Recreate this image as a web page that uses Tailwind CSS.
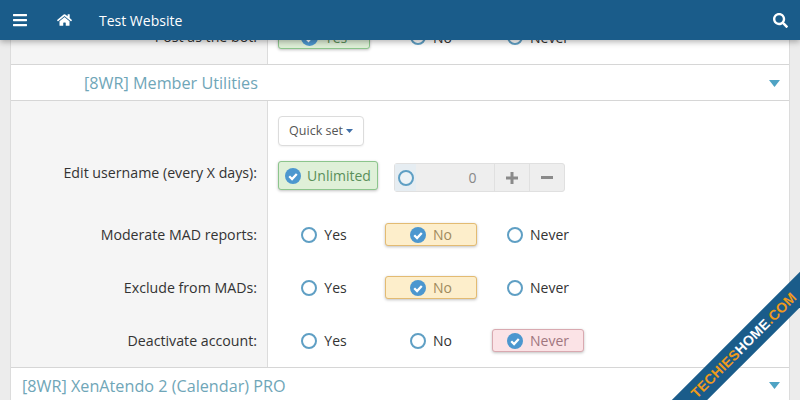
<!DOCTYPE html>
<html lang="en">
<head>
    <meta charset="UTF-8">
    <meta name="viewport" content="width=device-width, initial-scale=1.0">
    <title>Test Website</title>
    <script src="https://cdn.jsdelivr.net/npm/@tailwindcss/browser@4"></script>
</head>
<body class="relative w-[800px] h-[400px] overflow-hidden bg-[#ececec] font-['Open_Sans','Noto_Sans',sans-serif] text-[14px] text-[#333]">

    <!-- top bar -->
    <header class="absolute top-0 inset-x-0 z-10 h-10 flex items-center bg-[#1a5c8a] text-white shadow-[0_2px_6px_rgba(0,0,0,0.3)]">
        <svg class="ml-[13px] w-[14px] h-[16px]" viewBox="0 0 448 512" fill="#fff"><path d="M16 132h416c8.837 0 16-7.163 16-16V76c0-8.837-7.163-16-16-16H16C7.163 60 0 67.163 0 76v40c0 8.837 7.163 16 16 16zm0 160h416c8.837 0 16-7.163 16-16v-40c0-8.837-7.163-16-16-16H16c-8.837 0-16 7.163-16 16v40c0 8.837 7.163 16 16 16zm0 160h416c8.837 0 16-7.163 16-16v-40c0-8.837-7.163-16-16-16H16c-8.837 0-16 7.163-16 16v40c0 8.837 7.163 16 16 16z"/></svg>
        <svg class="ml-[30px] w-[15px] h-[14px]" viewBox="0 0 576 512" fill="#fff"><path d="M280.37 148.26L96 300.11V464a16 16 0 0 0 16 16l112.06-.29a16 16 0 0 0 15.92-16V368a16 16 0 0 1 16-16h64a16 16 0 0 1 16 16v95.64a16 16 0 0 0 16 16.05L464 480a16 16 0 0 0 16-16V300L295.67 148.26a12.19 12.19 0 0 0-15.3 0zM571.6 251.47L488 182.56V44.05a12 12 0 0 0-12-12h-56a12 12 0 0 0-12 12v72.61L318.47 43a48 48 0 0 0-61 0L4.34 251.47a12 12 0 0 0-1.6 16.9l25.5 31A12 12 0 0 0 45.15 301l235.22-193.74a12.19 12.19 0 0 1 15.3 0L530.9 301a12 12 0 0 0 16.9-1.6l25.5-31a12 12 0 0 0-1.7-16.93z"/></svg>
        <span class="ml-[27px] text-[14px]">Test Website</span>
        <svg class="ml-auto mr-[12px] w-[15px] h-[15px]" viewBox="0 0 512 512" fill="#fff"><path d="M505 442.7L405.3 343c-4.5-4.5-10.6-7-17-7H372c27.6-35.3 44-79.7 44-128C416 93.1 322.9 0 208 0S0 93.1 0 208s93.1 208 208 208c48.3 0 92.7-16.4 128-44v16.3c0 6.4 2.5 12.5 7 17l99.7 99.7c9.4 9.4 24.6 9.4 33.9 0l28.3-28.3c9.4-9.4 9.4-24.6.1-34zM208 336c-70.7 0-128-57.2-128-128 0-70.7 57.2-128 128-128 70.7 0 128 57.2 128 128 0 70.7-57.2 128-128 128z"/></svg>
    </header>

    <!-- options panel -->
    <main class="mt-[12px] ml-[10px] w-[780px] border-x border-[#dcdcdc] bg-white">

        <div class="flex h-[52px]">
            <div class="w-[257px] shrink-0 bg-[#f5f5f5] border-r border-[#dcdcdc] pr-[10px] pb-[2px] text-[14.2px] flex items-center justify-end">Post as the bot:</div>
            <div class="pl-[10px] pb-[2px] grid grid-cols-[92px_92px_92px] gap-x-[15px] items-center">
                <span class="h-[23px] rounded-[3px] border border-[#8cc58c] bg-[#dff0d8] text-[#5a8f5a] shadow-[0_1px_3px_rgba(0,0,0,0.25)] flex items-center justify-center gap-[7px]"><svg class="w-[17px] h-[17px]" viewBox="0 0 17 17"><circle cx="8.5" cy="8.5" r="8.5" fill="#4c97cf"/><path d="M4.5 8.7l3 3 5-5.4" fill="none" stroke="#fff" stroke-width="2.4"/></svg>Yes</span>
                <span class="flex items-center justify-center gap-[7px]"><span class="w-[16px] h-[16px] rounded-full border-[2.5px] border-[#5f9fc4] bg-white"></span>No</span>
                <span class="flex items-center justify-center gap-[7px]"><span class="w-[16px] h-[16px] rounded-full border-[2.5px] border-[#5f9fc4] bg-white"></span>Never</span>
            </div>
        </div>

        <div class="h-[37px] border-y border-[#d6d6d6] pl-[73px] pr-[9px] pt-[1px] flex items-center justify-between text-[16.2px] text-[#6fa6b8]">
            <span>[8WR] Member Utilities</span>
            <svg class="w-[11px] h-[7px]" viewBox="0 0 11 7" fill="#4fa3c4"><path d="M0 0h11L5.500 7z"/></svg>
        </div>

        <div class="flex">
            <div class="w-[257px] shrink-0 bg-[#f5f5f5] border-r border-[#dcdcdc] pr-[10px] text-right text-[14.2px]">
                <div class="h-[60px]"></div>
                <div class="h-[47px] flex items-start justify-end pt-[1px]">Edit username (every X days):</div>
                <div class="h-[53px] flex items-center justify-end">Moderate MAD reports:</div>
                <div class="h-[53px] flex items-center justify-end">Exclude from MADs:</div>
                <div class="h-[53px] flex items-center justify-end">Deactivate account:</div>
            </div>
            <div class="pl-[10px]">
                <div class="h-[60px] pt-[15px]">
                    <span class="inline-flex items-center gap-[3px] h-[30px] w-[86px] justify-center rounded-[4px] border border-[#dcdcdc] bg-white text-[12.500px] text-[#555] shadow-[0_1px_2px_rgba(0,0,0,0.06)]">Quick set<svg class="w-[7px] h-[4px]" viewBox="0 0 7 4" fill="#3f6fa8"><path d="M0 0h7L3.500 4z"/></svg></span>
                </div>
                <div class="h-[47px] flex items-start">
                    <span class="h-[29px] w-[100px] rounded-[3px] border border-[#8cc58c] bg-[#dff0d8] text-[#5a8f5a] shadow-[0_1px_3px_rgba(0,0,0,0.25)] flex items-center justify-center gap-[6px]"><svg class="w-[16px] h-[16px]" viewBox="0 0 17 17"><circle cx="8.500" cy="8.500" r="8.500" fill="#4c97cf"/><path d="M4.500 8.700l3 3 5-5.400" fill="none" stroke="#fff" stroke-width="2.400"/></svg>Unlimited</span>
                    <div class="ml-[16px] mt-[2px] w-[171px] h-[29px] flex rounded-[3px] border border-[#e0e0e0] bg-[#eeeeee] text-[#888]">
                        <span class="w-[21px] flex items-center pl-[3px] bg-[#e6edf2]"><span class="w-[16px] h-[16px] rounded-full border-[2.5px] border-[#5f9fc4] bg-[#eef3f6]"></span></span>
                        <span class="w-[79px] flex items-center justify-end pr-[18px]">0</span>
                        <span class="w-[35px] border-l border-[#e0e0e0] flex items-center justify-center"><svg class="w-[12px] h-[12px]" viewBox="0 0 12 12" fill="#8a8a8a"><path d="M4.500 0h3v4.500H12v3H7.500V12h-3V7.500H0v-3h4.500z"/></svg></span>
                        <span class="w-[35px] border-l border-[#e0e0e0] flex items-center justify-center"><svg class="w-[12px] h-[3px]" viewBox="0 0 12 3" fill="#8a8a8a"><path d="M0 0h12v3H0z"/></svg></span>
                    </div>
                </div>

                <div class="h-[53px] grid grid-cols-[92px_92px_92px] gap-x-[15px] items-center">
                    <span class="flex items-center justify-center gap-[7px]"><span class="w-[16px] h-[16px] rounded-full border-[2.5px] border-[#5f9fc4] bg-white"></span>Yes</span>
                    <span class="h-[23px] rounded-[3px] border border-[#e3bb72] bg-[#fdeecb] text-[#a08a5c] shadow-[0_1px_3px_rgba(0,0,0,0.25)] flex items-center justify-center gap-[7px]"><svg class="w-[16px] h-[16px]" viewBox="0 0 17 17"><circle cx="8.500" cy="8.500" r="8.500" fill="#4c97cf"/><path d="M4.500 8.700l3 3 5-5.400" fill="none" stroke="#fff" stroke-width="2.400"/></svg>No</span>
                    <span class="flex items-center justify-center gap-[7px]"><span class="w-[16px] h-[16px] rounded-full border-[2.5px] border-[#5f9fc4] bg-white"></span>Never</span>
                </div>
                <div class="h-[53px] grid grid-cols-[92px_92px_92px] gap-x-[15px] items-center">
                    <span class="flex items-center justify-center gap-[7px]"><span class="w-[16px] h-[16px] rounded-full border-[2.5px] border-[#5f9fc4] bg-white"></span>Yes</span>
                    <span class="h-[23px] rounded-[3px] border border-[#e3bb72] bg-[#fdeecb] text-[#a08a5c] shadow-[0_1px_3px_rgba(0,0,0,0.25)] flex items-center justify-center gap-[7px]"><svg class="w-[16px] h-[16px]" viewBox="0 0 17 17"><circle cx="8.500" cy="8.500" r="8.500" fill="#4c97cf"/><path d="M4.500 8.700l3 3 5-5.400" fill="none" stroke="#fff" stroke-width="2.400"/></svg>No</span>
                    <span class="flex items-center justify-center gap-[7px]"><span class="w-[16px] h-[16px] rounded-full border-[2.5px] border-[#5f9fc4] bg-white"></span>Never</span>
                </div>
                <div class="h-[53px] grid grid-cols-[92px_92px_92px] gap-x-[15px] items-center">
                    <span class="flex items-center justify-center gap-[7px]"><span class="w-[16px] h-[16px] rounded-full border-[2.5px] border-[#5f9fc4] bg-white"></span>Yes</span>
                    <span class="flex items-center justify-center gap-[7px]"><span class="w-[16px] h-[16px] rounded-full border-[2.5px] border-[#5f9fc4] bg-white"></span>No</span>
                    <span class="h-[23px] rounded-[3px] border border-[#d9a9b0] bg-[#fbe3e6] text-[#a0767e] shadow-[0_1px_3px_rgba(0,0,0,0.25)] flex items-center justify-center gap-[7px]"><svg class="w-[16px] h-[16px]" viewBox="0 0 17 17"><circle cx="8.500" cy="8.500" r="8.500" fill="#4c97cf"/><path d="M4.500 8.700l3 3 5-5.400" fill="none" stroke="#fff" stroke-width="2.400"/></svg>Never</span>
                </div>
            </div>
        </div>

        <div class="h-[33px] border-t border-[#d6d6d6] pl-[11px] pr-[9px] pt-[6px] flex items-start justify-between text-[16.2px] text-[#6fa6b8]">
            <span>[8WR] XenAtendo 2 (Calendar) PRO</span>
            <svg class="mt-[8px] w-[11px] h-[7px]" viewBox="0 0 11 7" fill="#4fa3c4"><path d="M0 0h11L5.500 7z"/></svg>
        </div>
    </main>

    <!-- corner ribbon, clipped to the window -->
    <div class="absolute inset-0 z-20 overflow-hidden pointer-events-none">
        <div class="absolute left-[595px] top-[332px] w-[300px] h-[25px] -rotate-45 bg-[#1a5c8a] flex items-center justify-center pr-[3px] font-['Liberation_Sans',sans-serif] font-bold text-[14px] tracking-[0.2px] text-[#f09a1a]">
            <span>TECHIES<span class="text-white">HOME</span>.COM</span>
        </div>
    </div>
</body>
</html>
